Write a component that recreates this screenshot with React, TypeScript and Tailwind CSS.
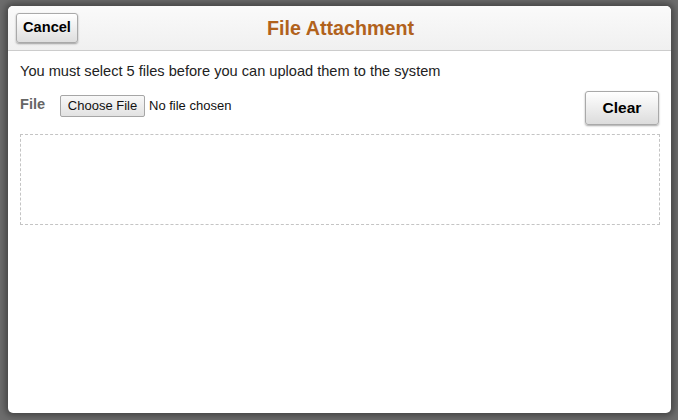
export default function App() {
  return (
    <div className="w-[678px] h-[420px] bg-[#6c6c6c] overflow-hidden pt-[6px] pl-[8px] font-['Liberation_Sans',Arial,sans-serif]">
      <div className="w-[663px] h-[407px] bg-white rounded-[5px] shadow-[0_0_6px_3px_rgba(0,0,0,0.35)] flex flex-col overflow-hidden">
        <div className="relative h-[45px] shrink-0 bg-gradient-to-b from-[#fafafa] to-[#f0f0f0] border-b border-[#cccccc] flex items-center justify-center">
          <button className="absolute left-[8px] top-[7px] w-[62px] h-[30px] rounded-[3px] border border-[#a9a9a9] bg-gradient-to-b from-white to-[#dedede] shadow-[0_1px_2px_rgba(0,0,0,0.35)] text-[14.6px] font-bold text-black">
            Cancel
          </button>
          <div className="text-[19.7px] font-bold text-[#b1621c] ml-[2px] mt-[2px]">File Attachment</div>
        </div>
        <div className="px-[12px] pt-[11px] flex flex-col">
          <div className="text-[14.6px] text-[#222222] leading-[18px]">
            You must select 5 files before you can upload them to the system
          </div>
          <div className="flex items-start justify-between mt-[11px]">
            <div className="flex items-center mt-[4px]">
              <span className="text-[14.6px] font-bold text-[#666666] w-[40px] -mt-[2px]">File</span>
              <div className="h-[22px] w-[85px] flex items-center justify-center rounded-[2px] border border-[#a6a6a6] bg-gradient-to-b from-[#f8f8f8] to-[#e2e2e2] text-[13px] text-[#111111]">
                Choose File
              </div>
              <span className="text-[13px] text-[#111111] ml-[4px]">No file chosen</span>
            </div>
            <button className="w-[74px] h-[34px] rounded-[3px] border border-[#a9a9a9] bg-gradient-to-b from-white to-[#dcdcdc] shadow-[0_1px_2px_rgba(0,0,0,0.35)] text-[15.5px] font-bold text-black">
              Clear
            </button>
          </div>
          <div className="mt-[9px] w-[640px] h-[91px] border border-dashed border-[#c4c4c4]"></div>
        </div>
      </div>
    </div>
  )
}
